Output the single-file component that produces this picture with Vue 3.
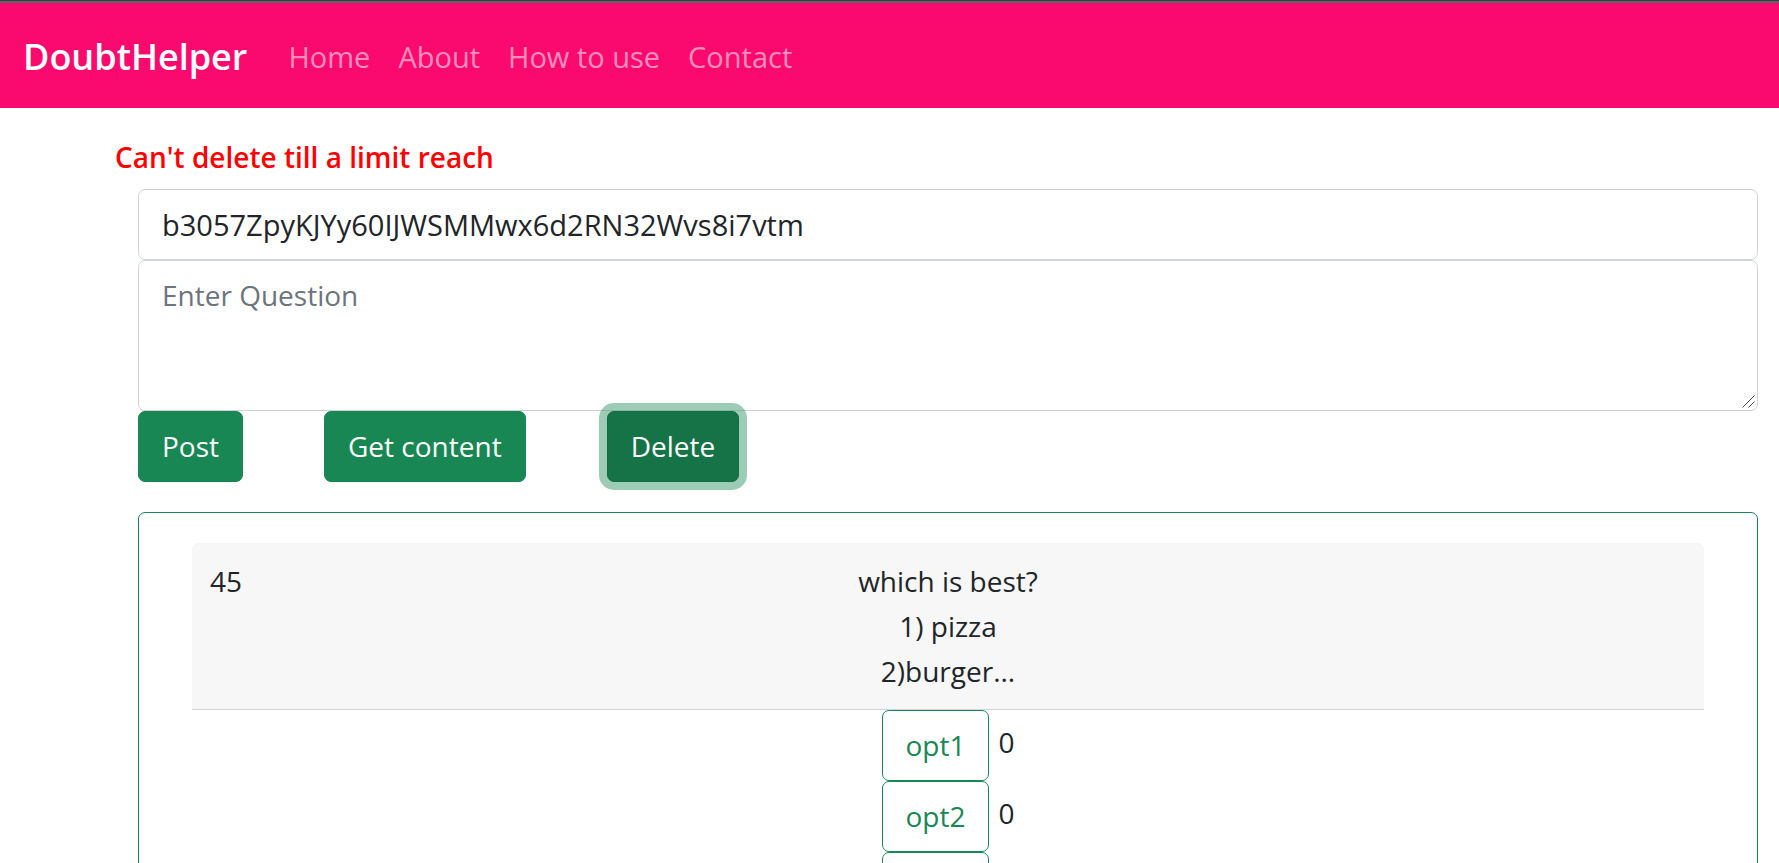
<script setup>
import { ref } from 'vue'

const links = ['Home', 'About', 'How to use', 'Contact']
const userKey = ref('b3057ZpyKJYy60IJWSMMwx6d2RN32Wvs8i7vtm')
const question = ref('')
const post = {
  id: 45,
  lines: ['which is best?', '1) pizza', '2)burger...'],
  options: [
    { name: 'opt1', votes: 0 },
    { name: 'opt2', votes: 0 },
    { name: 'opt3', votes: 0 },
  ],
}
</script>

<template>
  <div class="page">
    <nav class="navbar">
      <a class="brand" href="#">DoubtHelper</a>
      <a v-for="link in links" :key="link" class="nav-link" href="#">{{ link }}</a>
    </nav>

    <main>
      <p class="message" role="alert">Can't delete till a limit reach</p>
      <div class="content">
        <input v-model="userKey" class="field key" type="text" aria-label="Key" />
        <div class="question-box">
          <textarea v-model="question" class="field question" placeholder="Enter Question" aria-label="Question"></textarea>
          <svg class="grip" width="13" height="13" viewBox="0 0 13 13" aria-hidden="true">
            <path d="M0.5 12.5L12.5 0.5M6.5 12.5L12.5 6.5" stroke="#4a4a4a" stroke-width="1" fill="none" />
          </svg>
        </div>
        <div class="actions">
          <button class="btn" type="button">Post</button>
          <button class="btn" type="button">Get content</button>
          <button class="btn active" type="button">Delete</button>
        </div>

        <article class="card">
          <header class="card-header">
            <span class="number">{{ post.id }}</span>
            <div class="text">
              <div v-for="line in post.lines" :key="line">{{ line }}</div>
            </div>
            <span></span>
          </header>
          <div v-for="option in post.options" :key="option.name" class="option">
            <button class="btn outline" type="button">{{ option.name }}</button>
            <span class="votes">{{ option.votes }}</span>
          </div>
        </article>
      </div>
    </main>
  </div>
</template>

<style>
body {
  margin: 0;
  background: #fff;
}
html {
  height: 100%;
  overflow: hidden;
}
</style>

<style scoped>
.page,
.field,
.btn {
  font-family: 'Segoe UI', 'Open Sans', 'Noto Sans', sans-serif;
  font-size: 28px;
  line-height: 45px;
  color: #212529;
}
.page {
  height: 100vh;
  overflow: hidden;
  box-sizing: border-box;
  border-top: 1px solid #383b3f;
}
.navbar {
  display: flex;
  align-items: center;
  gap: 28px;
  padding: 31px 23px 29px;
  border-top: 2px solid #5f6368;
  background: #fa0a6e;
}
.brand {
  margin-right: 13px;
  color: #fff;
  font-size: 36px;
  font-weight: 600;
  text-decoration: none;
}
.nav-link {
  color: rgba(255, 255, 255, 0.55);
  font-size: 29px;
  text-decoration: none;
}
.message {
  margin: 27px 0 9px 115px;
  color: #f00;
  font-weight: 600;
}
.content {
  margin: 0 21px 0 138px;
}
.field {
  display: block;
  box-sizing: border-box;
  width: 100%;
  height: 71px;
  margin: 0;
  padding: 12px 23px;
  border: 1px solid #ced4da;
  border-radius: 7px;
  background: #fff;
  outline: none;
}
.key {
  font-size: 29px;
}
.question-box {
  position: relative;
}
.question {
  height: 151px;
  resize: vertical;
}
.question::-webkit-resizer {
  background: transparent;
}
.grip {
  position: absolute;
  right: 3px;
  bottom: 3px;
  pointer-events: none;
}
.field::placeholder {
  color: #6c757d;
  opacity: 1;
}
.actions {
  display: flex;
  gap: 81px;
}
.btn {
  padding: 12px 23px;
  border: 1px solid #198754;
  border-radius: 7px;
  background: #198754;
  color: #fff;
  cursor: pointer;
}
.btn.active {
  position: relative;
  border-color: #146c43;
  background: #157347;
  box-shadow: 0 0 0 8px rgba(60, 153, 110, 0.5);
}
.card {
  margin-top: 30px;
  padding: 30px 53px;
  border: 1px solid #198754;
  border-radius: 7px;
}
.card-header {
  display: grid;
  grid-template-columns: 1fr auto 1fr;
  padding: 16px 18px 15px;
  border-bottom: 1px solid #d5d5d5;
  border-radius: 6px 6px 0 0;
  background: #f7f7f7;
}
.text,
.option {
  text-align: center;
}
.option .btn {
  vertical-align: middle;
}
.btn.outline {
  background: transparent;
  color: #198754;
}
.votes {
  margin-left: 9px;
}
</style>
